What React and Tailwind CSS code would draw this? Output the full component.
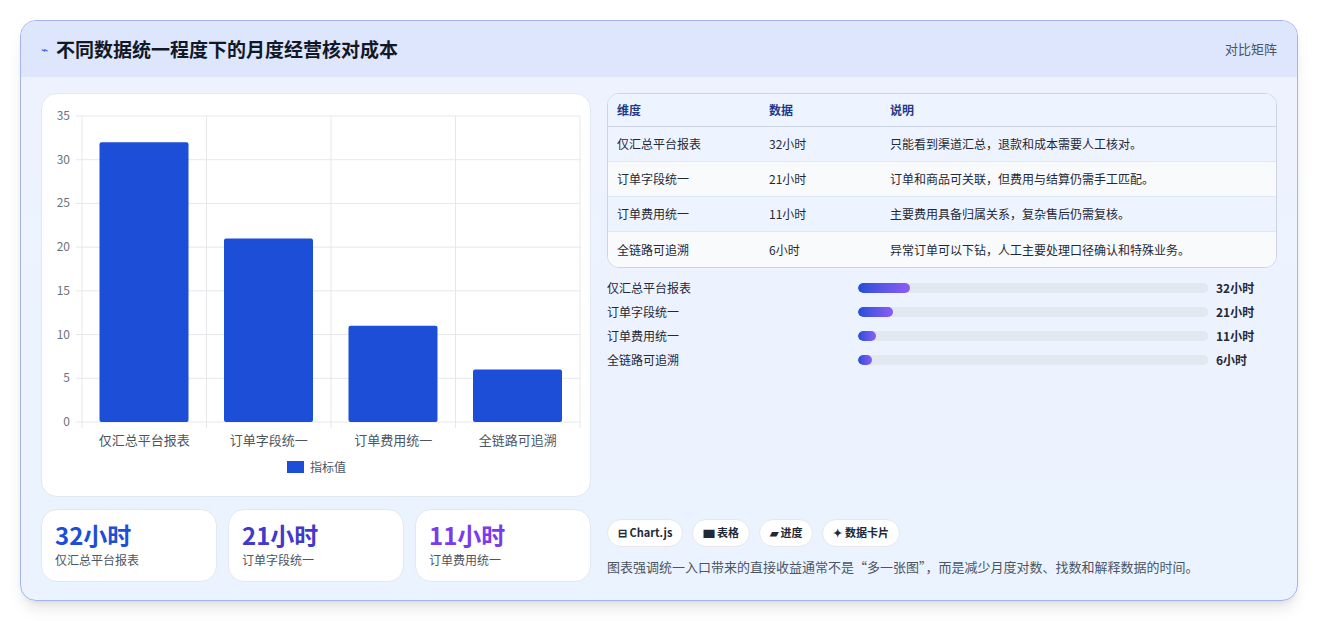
const F = { fontFamily: '"Noto Sans CJK SC","Noto Sans",sans-serif' };
const rows = [
  ["仅汇总平台报表", 32, "只能看到渠道汇总，退款和成本需要人工核对。", 52],
  ["订单字段统一", 21, "订单和商品可关联，但费用与结算仍需手工匹配。", 35],
  ["订单费用统一", 11, "主要费用具备归属关系，复杂售后仍需复核。", 18],
  ["全链路可追溯", 6, "异常订单可以下钻，人工主要处理口径确认和特殊业务。", 14],
];
function Chart() {
  const x0 = 40, x1 = 538, y0 = 22, y1 = 328;
  const sy = (v) => y1 - (v / 35) * (y1 - y0);
  const cw = (x1 - x0) / 4;
  return (
    <svg width="550" height="403" style={F}>
      {[0, 5, 10, 15, 20, 25, 30, 35].map((v) => (
        <g key={v}>
          <line x1={x0 - 6} x2={x1} y1={sy(v)} y2={sy(v)} stroke="#e5e7eb" />
          <text x={x0 - 12} y={sy(v) + 4} textAnchor="end" fontSize="12" fill="#6b7280">{v}</text>
        </g>
      ))}
      {[0, 1, 2, 3, 4].map((i) => (
        <line key={i} x1={x0 + i * cw} x2={x0 + i * cw} y1={y0} y2={y1 + 6} stroke="#e5e7eb" />
      ))}
      {rows.map((r, i) => (
        <g key={i}>
          <rect x={x0 + i * cw + 17.5} y={sy(r[1])} width={89} height={y1 - sy(r[1])} rx="2" fill="#1d4ed8" />
          <text x={x0 + i * cw + cw / 2} y={y1 + 23} textAnchor="middle" fontSize="13" fill="#4b5563">{r[0]}</text>
        </g>
      ))}
      <rect x="245" y="367" width="17" height="12" fill="#1d4ed8" />
      <text x="268" y="378" fontSize="12" fill="#4b5563">指标值</text>
    </svg>
  );
}
export default function App() {
  return (
    <div className="w-[1318px] h-[621px] bg-white pt-5 pl-5" style={F}>
      <div className="w-[1278px] h-[581px] rounded-2xl border border-[#a5b4e8] bg-gradient-to-b from-[#eef2fe] to-[#eaf3ff] shadow-lg overflow-hidden flex flex-col">
        <div className="h-[56px] bg-[#dde6fd] flex items-center justify-between px-5">
          <div className="flex items-center gap-2">
            <span className="text-[#3b5bdb] text-[12px]">⌁</span>
            <span className="text-[19px] font-bold text-[#111827]">不同数据统一程度下的月度经营核对成本</span>
          </div>
          <span className="text-[13px] text-[#4b5563]">对比矩阵</span>
        </div>
        <div className="flex gap-4 px-5 pt-4">
          <div className="w-[550px] flex flex-col gap-3">
            <div className="h-[404px] bg-white rounded-2xl border border-[#e2e8f0]"><Chart /></div>
            <div className="flex gap-[11px]">
              {[["32小时", "仅汇总平台报表", "text-[#1d4ed8]"], ["21小时", "订单字段统一", "text-[#4338ca]"], ["11小时", "订单费用统一", "text-[#7c3aed]"]].map((s) => (
                <div key={s[1]} className="w-[176px] h-[73px] bg-white rounded-2xl border border-[#e2e8f0] px-[13px] pt-[9px]">
                  <div className={`text-[24px] font-bold leading-[32px] ${s[2]}`}>{s[0]}</div>
                  <div className="text-[12px] text-[#4b5563]">{s[1]}</div>
                </div>
              ))}
            </div>
          </div>
          <div className="w-[672px] flex flex-col">
            <div className="rounded-xl border border-[#cbd5e1] overflow-hidden bg-white text-[12px]">
              <div className="flex h-[33px] items-center bg-[#eef4ff] text-[#1e3a8a] font-bold border-b border-[#cbd5e1]">
                <div className="w-[161px] pl-[9px]">维度</div><div className="w-[121px]">数据</div><div>说明</div>
              </div>
              {rows.map((r, i) => (
                <div key={i} className={`flex h-[35px] items-center text-[#1f2937] ${i < 3 ? "border-b border-[#e2e8f0]" : ""} ${i % 2 ? "bg-[#f8fafc]" : "bg-[#eef4ff]"}`}>
                  <div className="w-[161px] pl-[9px]">{r[0]}</div><div className="w-[121px]">{r[1]}小时</div><div>{r[2]}</div>
                </div>
              ))}
            </div>
            <div className="flex flex-col gap-[8px] mt-[12px]">
              {rows.map((r, i) => (
                <div key={i} className="flex items-center h-[16px] text-[12px] text-[#1f2937]">
                  <div className="w-[251px]">{r[0]}</div>
                  <div className="w-[350px] h-[10px] rounded-full bg-[#e2e8f0] overflow-hidden">
                    <div className="h-full rounded-full bg-gradient-to-r from-[#1d4ed8] to-[#8b5cf6]" style={{ width: r[3] }} />
                  </div>
                  <div className="ml-[8px] font-bold">{r[1]}小时</div>
                </div>
              ))}
            </div>
            <div className="mt-auto flex gap-[9px] text-[11px] text-[#1f2937] font-bold">
              {["⊟ Chart.js", "▆ 表格", "▰ 进度", "✦ 数据卡片"].map((t) => (
                <span key={t} className="h-[28px] px-[10px] flex items-center rounded-full bg-white border border-[#e5e7eb]">{t}</span>
              ))}
            </div>
            <div className="text-[13px] text-[#4b5563] mt-[10px] mb-[6px]">图表强调统一入口带来的直接收益通常不是“多一张图”，而是减少月度对数、找数和解释数据的时间。</div>
          </div>
        </div>
      </div>
    </div>
  );
}
